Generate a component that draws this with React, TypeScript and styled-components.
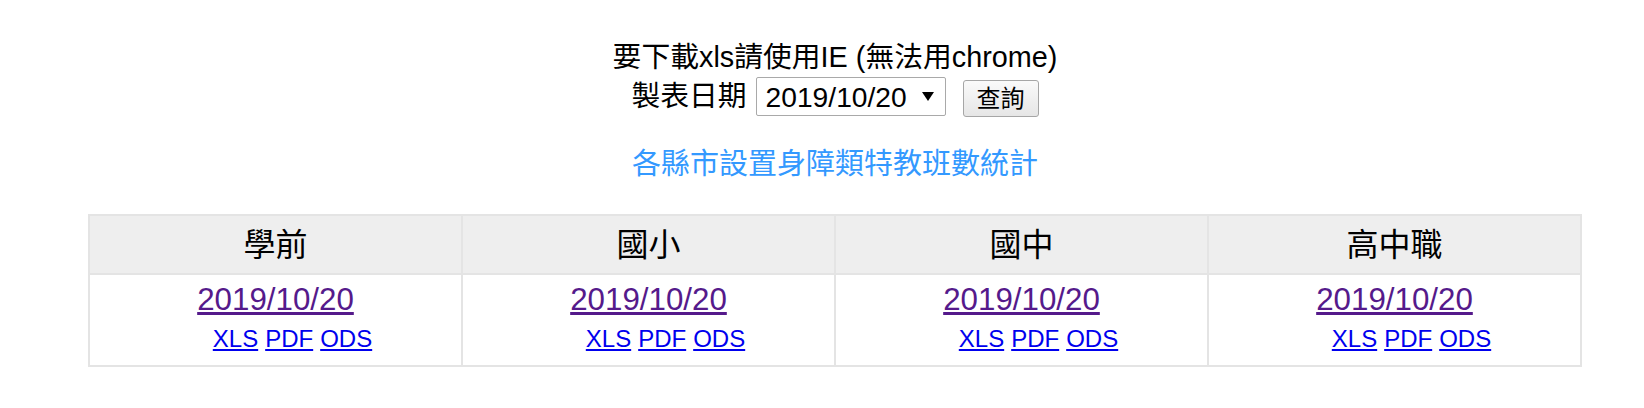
import React from 'react';
import styled, { createGlobalStyle } from 'styled-components';

const GlobalStyle = createGlobalStyle`
  html, body {
    margin: 0;
    padding: 0;
    background: #ffffff;
  }

  body {
    font-family: 'Liberation Sans', 'Noto Sans CJK TC', sans-serif;
    color: #000000;
  }
`;

const Page = styled.div`
  width: 1494px;
  margin-left: 88px;
  padding-top: 38px;
  display: flex;
  flex-direction: column;
  align-items: center;
`;

const Notice = styled.div`
  font-size: 28.8px;
  line-height: 39px;
  height: 39px;
  white-space: nowrap;
`;

const QueryRow = styled.form`
  display: flex;
  align-items: flex-start;
  height: 40px;
  font-size: 28.8px;
  line-height: 39px;
  margin: 0;
`;

const Label = styled.span`
  margin-right: 9px;
`;

const SelectWrapper = styled.div`
  position: relative;
  width: 190px;
  height: 39px;
`;

const DateSelect = styled.select`
  appearance: none;
  width: 100%;
  height: 100%;
  margin: 0;
  padding: 0 0 0 9px;
  border: 1px solid #a9a9a9;
  border-radius: 2px;
  background: #ffffff;
  font-family: 'Liberation Sans', sans-serif;
  font-size: 28.2px;
  color: #000000;
  outline: none;
`;

const Arrow = styled.span`
  position: absolute;
  right: 12px;
  top: 15px;
  width: 0;
  height: 0;
  border-left: 6px solid transparent;
  border-right: 6px solid transparent;
  border-top: 9px solid #000000;
  pointer-events: none;
`;

const QueryButton = styled.button`
  width: 76px;
  height: 37px;
  margin: 3px 0 0 17px;
  padding: 0;
  border: 1px solid #a6a6a6;
  border-radius: 3px;
  background: linear-gradient(#fafafa, #e6e6e6);
  font-family: 'Liberation Sans', 'Noto Sans CJK TC', sans-serif;
  font-size: 24px;
  line-height: 35px;
  color: #000000;
`;

const ReportTitle = styled.a`
  display: block;
  margin-top: 29px;
  font-size: 29px;
  line-height: 36px;
  color: #3399ff;
  text-decoration: none;
  white-space: nowrap;
`;

const StatsTable = styled.table`
  margin-top: 32px;
  width: 1494px;
  table-layout: fixed;
  border-collapse: collapse;
  border: 2px solid #e4e4e4;
  font-size: 32px;
`;

const HeadCell = styled.th`
  height: 57px;
  padding: 0;
  border: 2px solid #e4e4e4;
  background: #eeeeee;
  font-weight: normal;
  line-height: 40px;
  text-align: center;
  vertical-align: middle;
`;

const BodyCell = styled.td`
  height: 90px;
  padding: 0;
  border: 2px solid #e4e4e4;
  text-align: center;
  vertical-align: top;
`;

const CellStack = styled.div`
  display: flex;
  flex-direction: column;
  align-items: center;
  padding-top: 7px;
`;

const DateLink = styled.a`
  font-size: 31.3px;
  line-height: 36px;
  color: #551a8b;
  text-decoration: underline;
`;

const FileLinks = styled.div`
  display: flex;
  gap: 7px;
  margin-top: 7px;
  padding-left: 34px;
  font-size: 24px;
  line-height: 28px;
`;

const FileLink = styled.a`
  color: #0000ee;
  text-decoration: underline;
`;

const levels = ['學前', '國小', '國中', '高中職'];
const formats = ['XLS', 'PDF', 'ODS'];

export default function App() {
  return (
    <>
      <GlobalStyle />
      <Page>
        <Notice>要下載xls請使用IE (無法用chrome)</Notice>
        <QueryRow onSubmit={(e) => e.preventDefault()}>
          <Label>製表日期</Label>
          <SelectWrapper>
            <DateSelect defaultValue="2019/10/20">
              <option value="2019/10/20">2019/10/20</option>
            </DateSelect>
            <Arrow />
          </SelectWrapper>
          <QueryButton type="submit">查詢</QueryButton>
        </QueryRow>
        <ReportTitle href="#">各縣市設置身障類特教班數統計</ReportTitle>
        <StatsTable>
          <thead>
            <tr>
              {levels.map((level) => (
                <HeadCell key={level}>{level}</HeadCell>
              ))}
            </tr>
          </thead>
          <tbody>
            <tr>
              {levels.map((level) => (
                <BodyCell key={level}>
                  <CellStack>
                    <DateLink href="#">2019/10/20</DateLink>
                    <FileLinks>
                      {formats.map((f) => (
                        <FileLink key={f} href="#">
                          {f}
                        </FileLink>
                      ))}
                    </FileLinks>
                  </CellStack>
                </BodyCell>
              ))}
            </tr>
          </tbody>
        </StatsTable>
      </Page>
    </>
  );
}
